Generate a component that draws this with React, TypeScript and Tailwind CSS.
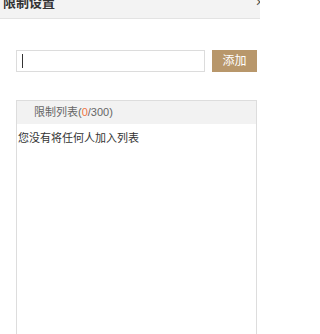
export default function App() {
  return (
    <div
      className="w-[260px] h-[334px] overflow-hidden bg-white"
      style={{ fontFamily: '"Liberation Sans", "Noto Sans CJK SC", sans-serif' }}
    >
      {/* title bar, scrolled slightly out of view */}
      <div className="-mt-[14px] h-[33px] flex items-center justify-between bg-[#f3f3f3] border-b border-[#e3e3e3]">
        <span className="pl-[3px] text-[13px] font-bold text-[#333] leading-none">限制设置</span>
        <span className="-mr-[4px] text-[14px] text-[#555] leading-none">×</span>
      </div>

      <div className="pl-[16px] pr-[3px]">
        <div className="mt-[31px] flex gap-[7px]">
          <div className="flex-1 h-[22px] border border-[#dcdcdc] flex items-center">
            <span className="ml-[5px] w-px h-[14px] bg-[#333]" />
          </div>
          <button className="w-[45px] h-[22px] bg-[#b8976b] text-white text-[12px]">添加</button>
        </div>

        <div className="mt-[28px] h-[260px] border border-[#dddddd] border-b-0">
          <div className="h-[23px] bg-[#f2f2f2] flex items-center pl-[17px] text-[11px] text-[#666]">
            限制列表(<span className="text-[#f0743e]">0</span>/300)
          </div>
          <p className="pt-[6px] pl-px text-[11px] text-[#333]">您没有将任何人加入列表</p>
        </div>
      </div>
    </div>
  );
}
